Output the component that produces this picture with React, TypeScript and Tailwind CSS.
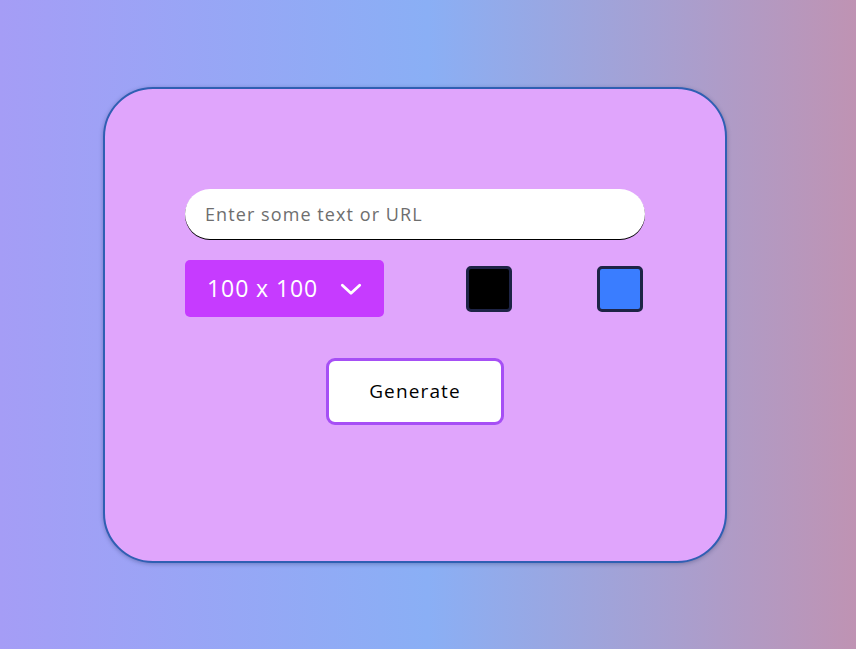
import React from "react";

const App: React.FC = () => {
  return (
    <div
      className="min-h-[649px] w-full bg-[linear-gradient(to_right,#a59df6,#8aaff5_50%,#bf93b3)] pl-[103px] pt-[87px]"
      style={{ fontFamily: "'Open Sans', 'Liberation Sans', sans-serif" }}
    >
      <div className="flex h-[476px] w-[624px] flex-col rounded-[50px] border-2 border-[#2f5fb3] bg-[#e0a5fc] px-20 pt-[100px] shadow-[0_1px_4px_rgba(30,40,90,0.35)]">
        <input
          type="text"
          placeholder="Enter some text or URL"
          className="h-[50px] w-full rounded-full bg-white px-5 text-[18px] tracking-[0.06em] text-black shadow-[0_1px_0.5px_#000] outline-none placeholder:text-[#6e6e6e]"
        />
        <div className="mt-[21px] flex items-center">
          <div className="flex h-[57px] w-[199px] items-center rounded-[5px] bg-[#c63bff] pl-[22px] text-[23px] tracking-[0.04em] text-white">
            <span>100 x 100</span>
            <svg
              className="ml-[20px]"
              width="26"
              height="26"
              viewBox="0 0 24 24"
              fill="none"
              stroke="white"
              strokeWidth="2.6"
              strokeLinecap="round"
              strokeLinejoin="round"
            >
              <path d="M4 8.5l8 7.5 8-7.5" />
            </svg>
          </div>
          <div className="ml-[82px] h-[46px] w-[46px] rounded-[5px] border-[3px] border-[#1e2446] bg-black" />
          <div className="ml-[85px] h-[46px] w-[46px] rounded-[5px] border-[3px] border-[#1e2446] bg-[#3a7dff]" />
        </div>
        <div className="mt-[41px] flex justify-center">
          <button className="h-[67px] w-[178px] rounded-[9px] border-[3px] border-[#a64ff5] bg-white text-[19px] tracking-[0.06em] text-black">
            Generate
          </button>
        </div>
      </div>
    </div>
  );
};

export default App;
